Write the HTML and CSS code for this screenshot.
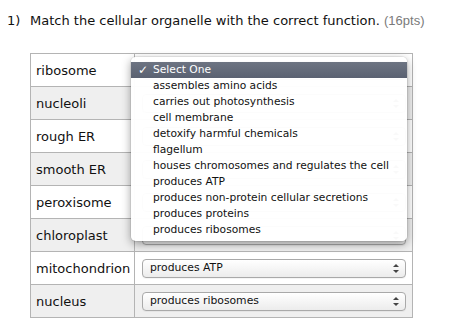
FILE: index.html
```html
<!DOCTYPE html>
<html>
<head>
<meta charset="utf-8">
<link rel="stylesheet" href="styles.css">
</head>
<body>
<div class="question"><span class="num">1)</span>Match the cellular organelle with the correct function. <span class="pts">(16pts)</span></div>
<div class="wrap">
<table class="match">
<tr><td class="term">ribosome</td><td class="cell"><div class="sel"><span></span><i class="arr"></i></div></td></tr>
<tr class="alt"><td class="term">nucleoli</td><td class="cell"><div class="sel"><span></span><i class="arr"></i></div></td></tr>
<tr><td class="term">rough ER</td><td class="cell"><div class="sel"><span></span><i class="arr"></i></div></td></tr>
<tr class="alt"><td class="term">smooth ER</td><td class="cell"><div class="sel"><span></span><i class="arr"></i></div></td></tr>
<tr><td class="term">peroxisome</td><td class="cell"><div class="sel"><span></span><i class="arr"></i></div></td></tr>
<tr class="alt"><td class="term">chloroplast</td><td class="cell"><div class="sel"><span></span><i class="arr"></i></div></td></tr>
<tr><td class="term">mitochondrion</td><td class="cell"><div class="sel"><span>produces ATP</span><i class="arr"></i></div></td></tr>
<tr class="alt"><td class="term">nucleus</td><td class="cell"><div class="sel"><span>produces ribosomes</span><i class="arr"></i></div></td></tr>
</table>
<ul class="menu">
<li class="on"><span class="chk">✓</span>Select One</li>
<li>assembles amino acids</li>
<li>carries out photosynthesis</li>
<li>cell membrane</li>
<li>detoxify harmful chemicals</li>
<li>flagellum</li>
<li>houses chromosomes and regulates the cell</li>
<li>produces ATP</li>
<li>produces non-protein cellular secretions</li>
<li>produces proteins</li>
<li>produces ribosomes</li>
</ul>
</div>
</body>
</html>
```
FILE: styles.css
```css
html, body { margin: 0; padding: 0; background: #fff; }
body { font-family: "DejaVu Sans", Verdana, sans-serif; color: #111; }
.question { padding: 13px 0 0 7px; font-size: 13px; line-height: 16px; white-space: nowrap; }
.num { display: inline-block; width: 23px; }
.pts { font-family: "Liberation Sans", Arial, sans-serif; font-size: 13px; color: #7a7a7a; }
.wrap { position: relative; margin: 24px 0 0 30px; }
.match { border-collapse: collapse; width: 383px; }
.match td { border: 1px solid #b4b4b4; height: 32px; padding: 0; }
.match tr.alt td { background: #efefef; }
.term { width: 98px; padding-left: 5px !important; font-size: 13px; }
.cell { padding: 0 6px 0 7px !important; }
.sel { display: flex; align-items: center; justify-content: space-between; height: 17px; border: 1px solid #a9a9a9; border-radius: 4px; background: linear-gradient(#ffffff, #ececec); padding: 0 6px 0 7px; font-size: 10.8px; box-shadow: 0 1px 0 rgba(0,0,0,0.04); }
.sel span { line-height: 16px; }
.arr { position: relative; width: 6px; height: 9px; }
.arr::before, .arr::after { content: ""; position: absolute; left: 0; border-left: 3px solid transparent; border-right: 3px solid transparent; }
.arr::before { top: 0; border-bottom: 3px solid #444; }
.arr::after { bottom: 0; border-top: 3px solid #444; }
.menu { position: absolute; left: 101px; top: 4px; width: 276px; margin: 0; padding: 5px 0 3px; list-style: none; background: rgba(255,255,255,0.97); border-radius: 5px; box-shadow: 0 3px 10px rgba(0,0,0,0.38), 0 0 0 1px rgba(0,0,0,0.06); font-size: 10.7px; }
.menu li { position: relative; height: 16px; line-height: 16px; padding-left: 22px; white-space: nowrap; color: #111; }
.menu li.on { background: linear-gradient(#6d7482, #5a6171); color: #fff; }
.chk { position: absolute; left: 7px; top: 0; font-size: 12px; font-weight: bold; }
```
